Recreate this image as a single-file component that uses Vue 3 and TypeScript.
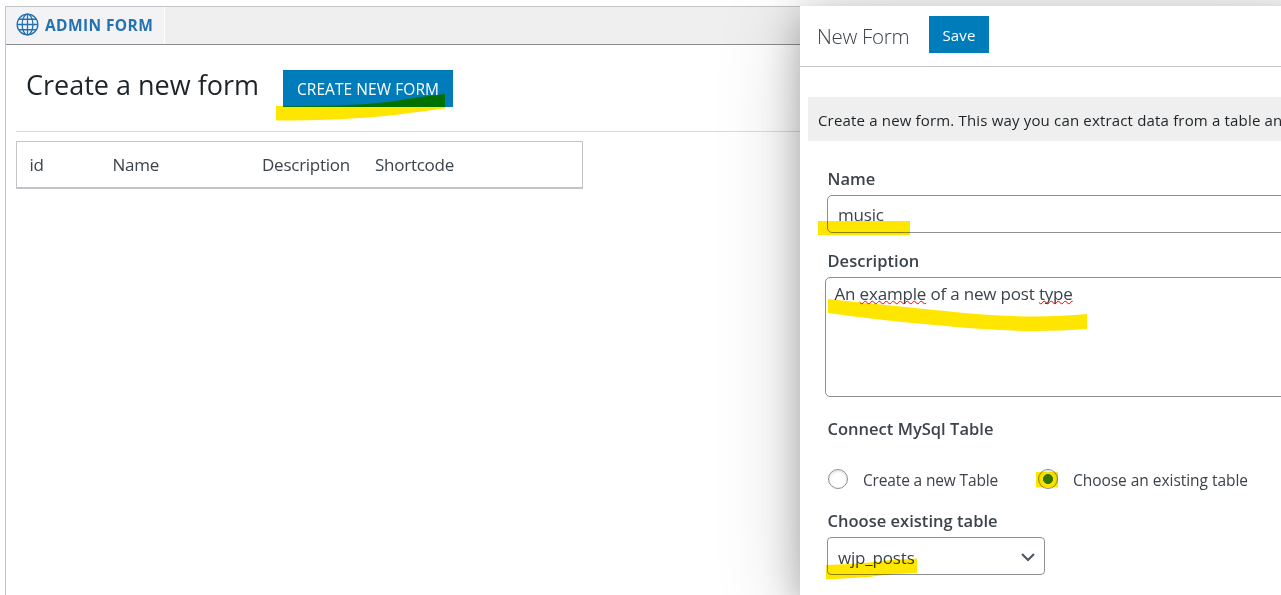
<script setup lang="ts">
import { ref } from 'vue'

const columns = [
  { key: 'id', label: 'id' },
  { key: 'name', label: 'Name' },
  { key: 'desc', label: 'Description' },
  { key: 'code', label: 'Shortcode' },
]
const name = ref('music')
const tableMode = ref('existing')
</script>

<template>
  <div class="screen">
    <main class="page">
      <nav class="tabs">
        <a class="tab">
          <svg class="globe" viewBox="0 0 24 24" fill="none" stroke="#2271b1" stroke-width="1.35">
            <circle cx="12" cy="12" r="10.8" />
            <ellipse cx="12" cy="12" rx="5.6" ry="10.8" />
            <path d="M12 1.2v21.6M1.2 12h21.6M3 6.5h18M3 17.5h18" />
          </svg>
          <span class="tab-text">ADMIN FORM</span>
        </a>
      </nav>
      <header class="title-row">
        <h1>Create a new form</h1>
        <button class="btn create"><span>CREATE NEW FORM</span></button>
      </header>
      <div class="table">
        <span v-for="c in columns" :key="c.key" :class="c.key">{{ c.label }}</span>
      </div>
    </main>

    <aside class="drawer">
      <header class="drawer-head">
        <h2>New Form</h2>
        <button class="btn save"><span>Save</span></button>
      </header>
      <p class="notice">Create a new form. This way you can extract data from a table an</p>
      <form class="fields">
        <label class="l-name">Name</label>
        <div class="input"><span class="v-name">{{ name }}</span></div>
        <label class="l-desc">Description</label>
        <div class="area"><span class="v-desc">An <u>example</u> of a new post <u>type</u></span></div>
        <label class="l-connect">Connect MySql Table</label>
        <div class="radios">
          <i class="radio" :class="{ on: tableMode === 'new' }"></i>
          <span class="r-new">Create a new Table</span>
          <i class="radio" :class="{ on: tableMode === 'existing' }"></i>
          <span class="r-old">Choose an existing table</span>
        </div>
        <label class="l-choose">Choose existing table</label>
        <div class="select">
          <span class="v-select">wjp_posts</span>
          <svg width="16" height="16" viewBox="0 0 16 16" fill="none" stroke="#50575e" stroke-width="2.2">
            <path d="M2 5l6 6 6-6" />
          </svg>
        </div>
      </form>
    </aside>

    <svg class="marker" viewBox="0 0 1281 595" fill="#ffe600">
      <path d="M276 106Q350 107 395 101Q425 96 445 94V108.500Q425 111 395 115Q345 120.500 276 120.500Z" />
      <path d="M818 221H910V235H818Z" />
      <path d="M828 299Q895 306 945 311Q1025 320 1087 314V329Q1025 334 945 326Q885 321 828 313Z" />
      <path d="M1036 472H1058V487.500H1036Z" />
      <path d="M826 565Q865 564 890 560L917 558.500V573Q885 574 870 577L826 579.500Z" />
    </svg>
  </div>
</template>

<style>
body { margin: 0; overflow: hidden; }
</style>

<style scoped>
.screen {
  position: relative;
  display: flex;
  box-sizing: border-box;
  width: 1281px;
  height: 595px;
  padding: 6px 0 0 5px;
  overflow: hidden;
  background: #fff;
  color: #3c434a;
  font-family: "Open Sans", "Noto Sans", sans-serif;
  isolation: isolate;
}
span, h1, h2, label, .notice { white-space: nowrap; }
.page {
  flex: 0 0 795px;
  box-sizing: border-box;
  height: 589px;
  border: 1px solid #c3c4c7;
  border-width: 1px 0 0 1px;
}
.tabs { display: flex; height: 37px; background: #efefef; border-bottom: 1px solid #8c8c8c; }
.tab {
  display: flex;
  box-sizing: border-box;
  width: 159px;
  padding: 6px 0 0 10px;
  gap: 6px;
  background: #f3f3f6;
  border-right: 1px solid #fff;
  color: #2271b1;
}
.globe { width: 23px; height: 23px; flex: none; }
.tab-text { font-size: 15.500px; line-height: 24px; font-weight: 700; letter-spacing: 0.4px; }
.title-row {
  display: flex;
  align-items: flex-start;
  height: 86px;
  margin-left: 10px;
  border-bottom: 1px solid #dcdcde;
}
h1 { width: 257px; margin: 20px 0 0 10px; font-size: 27px; line-height: 40px; font-weight: 400; letter-spacing: 0; color: #1d2327; }
.btn {
  display: flex;
  justify-content: center;
  padding: 0;
  border: 0;
  background: #007cba;
  color: #fff;
  height: 37px;
  font: 400 15px/39px "Open Sans", sans-serif;
}
.create { width: 170px; margin-top: 25px; font-size: 15.500px; letter-spacing: 0.07px; }
.table {
  display: flex;
  box-sizing: border-box;
  width: 567px;
  height: 48px;
  margin: 9px 0 0 10px;
  padding-left: 12.500px;
  border: 1px solid #c3c4c7;
  border-bottom-width: 2px;
  font-size: 17px;
  line-height: 46px;
  letter-spacing: -0.25px;
}
.id { width: 83px; }
.name { width: 149.500px; }
.desc { width: 113px; }
.drawer {
  flex: 0 0 481px;
  height: 589px;
  background: #fff;
  box-shadow: 0 16px 80px rgba(0, 0, 0, 0.2), 0 10px 34px rgba(0, 0, 0, 0.25);
}
.drawer-head { display: flex; height: 60px; border-bottom: 1px solid #c3c4c7; }
h2 { width: 112px; margin: 0 0 0 17px; font-size: 20.500px; line-height: 61px; font-weight: 300; letter-spacing: -0.3px; color: #3c434a; }
.save { width: 60px; margin-top: 10px; letter-spacing: 0.1px; }
.notice {
  height: 44px;
  margin: 30px 0 0 8px;
  padding-left: 10px;
  overflow: hidden;
  background: #efefef;
  color: #1d2327;
  font-size: 15px;
  line-height: 47px;
  letter-spacing: 0.17px;
}
.fields { margin-left: 27px; }
label { display: block; height: 24px; padding-left: 0.500px; font-size: 16.500px; line-height: 24px; font-weight: 600; letter-spacing: 0.02px; }
.l-name { margin-top: 26px; height: 28px; }
.input, .area, .select { box-sizing: border-box; border: 1px solid #8c8f94; background: #fff; font-size: 17px; letter-spacing: -0.18px; }
.input { width: 480px; height: 38px; padding-left: 10px; border-radius: 5px; line-height: 38px; }
.l-desc { margin-top: 16px; height: 28px; }
.area { width: 480px; height: 120px; margin-left: -2px; padding-left: 8.500px; border-radius: 5px; line-height: 32px; }
.area u { text-decoration: underline wavy #f00 1.300px; text-underline-offset: 0; text-decoration-skip-ink: none; }
.l-connect { margin-top: 20px; }
.radios { display: flex; height: 22px; margin-top: 28px; font-size: 15.500px; line-height: 23px; }
.radio {
  box-sizing: border-box;
  width: 20px;
  height: 20px;
  margin-left: 1px;
  border: 1px solid #8c8f94;
  border-radius: 50%;
  box-shadow: inset 0 1px 3px rgba(0, 0, 0, 0.15);
}
.radio.on { background: radial-gradient(circle, #3582c4 4.700px, transparent 5.300px); }
.r-new { width: 174px; margin-left: 15px; letter-spacing: -0.15px; }
.r-old { margin-left: 15px; letter-spacing: -0.04px; }
.l-choose { height: 28px; margin-top: 18px; }
.select {
  display: flex;
  justify-content: space-between;
  width: 218px;
  height: 38px;
  padding: 0 8px 0 10px;
  border-radius: 4px;
  line-height: 40px;
}
.select svg { margin-top: 11px; }
.marker { position: absolute; inset: 0; width: 1281px; height: 595px; mix-blend-mode: multiply; pointer-events: none; }
</style>
